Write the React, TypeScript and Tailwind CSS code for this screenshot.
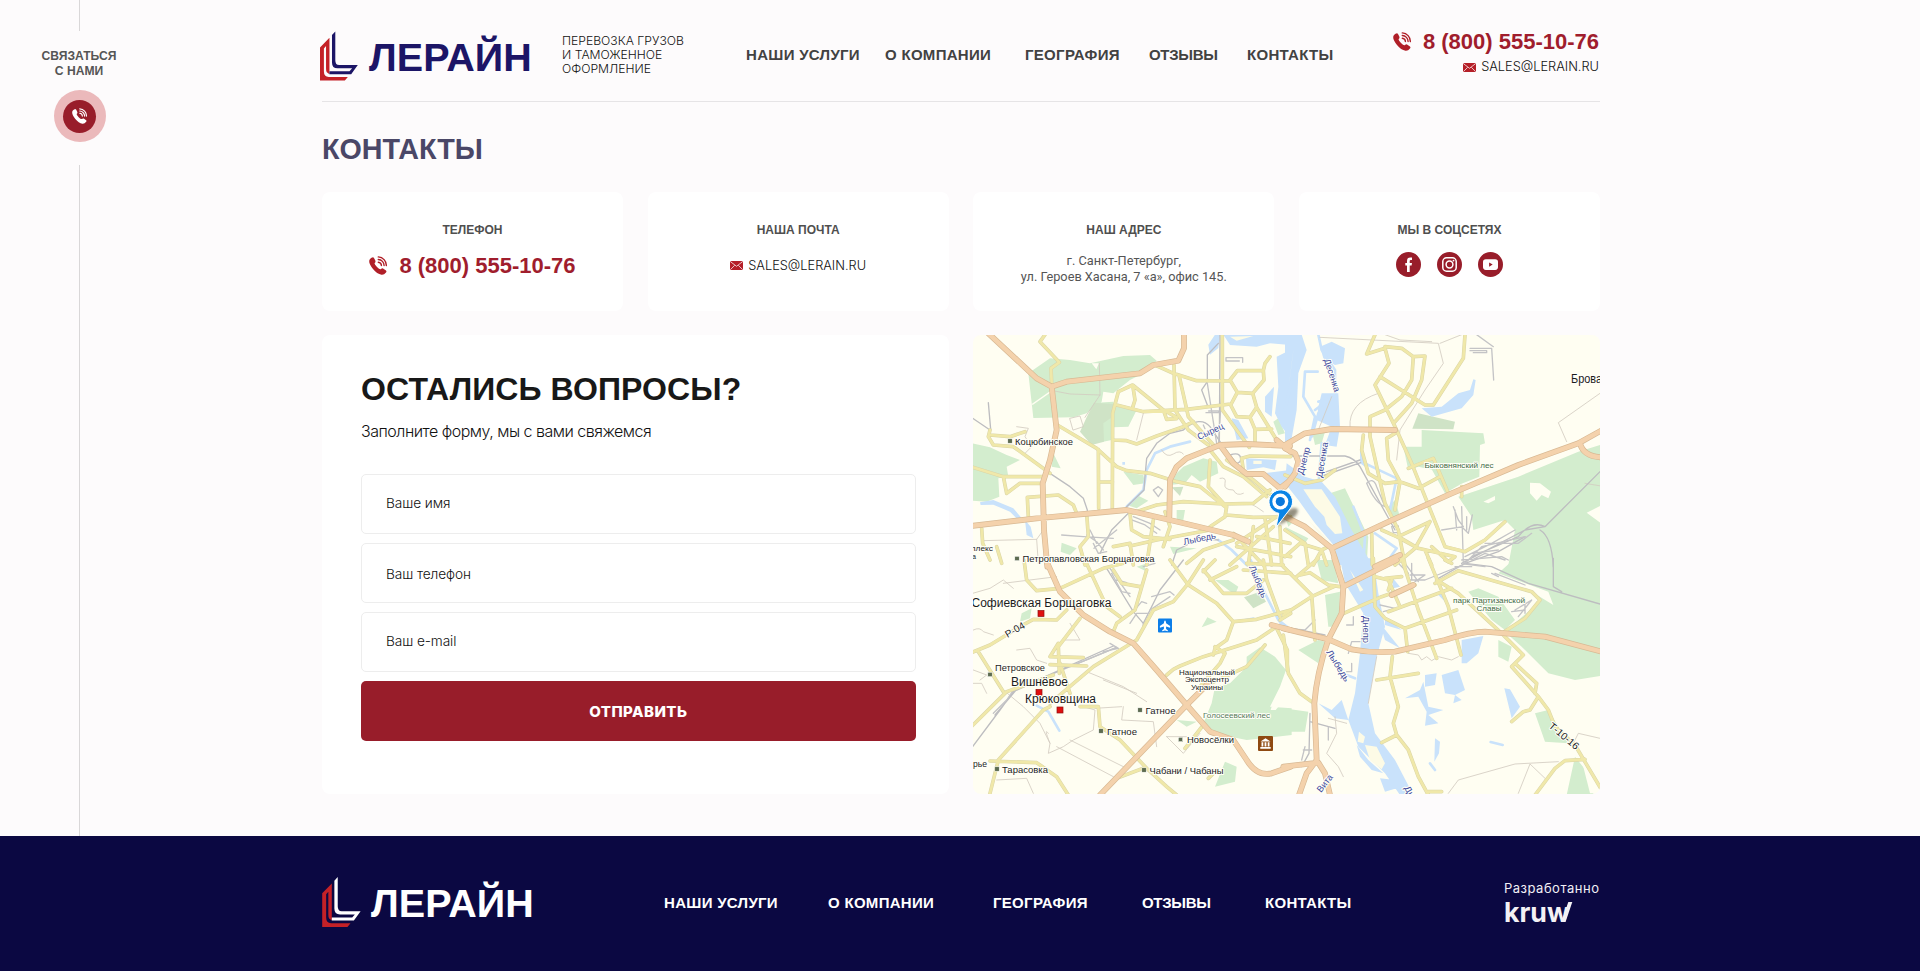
import type { ReactNode } from 'react';

/* ---------- map data: four tiles, drawn at three units per pixel ---------- */

type Tile = {
  x: number;
  y: number;
  forest: string;
  glade: string;
  cemetery: string;
  water: string;
  stream: string;
  isle: string;
  border: string;
  rail: string;
  yard: string;
  road: string;
  highway: string;
};

const northWest: Tile = {
  x: 970,
  y: 330,
  forest:
    'M175 130 L240 85 L300 90 L360 100 L460 78 L540 75 L560 92 L520 130 L480 150 L430 190 L400 185 L395 215 L350 250 L310 262 L190 264Z M430 215 L435 230 L495 235 L500 240 L475 290 L430 292 L425 330 L400 335 L380 218Z M8 340 L60 352 L110 375 L150 390 L110 410 L115 440 L85 445 L88 500 L50 515 L8 512Z M250 370 L272 415 L245 410Z M640 410 L700 385 L740 395 L745 430 L690 455 L665 435 L645 460 L600 465 L620 430Z M470 525 L505 497 L535 512 L500 535Z M620 540 h25 l-5 30 h-20z M275 638 L320 655 L300 675 L272 665Z M910 275 L925 265 L945 310 L925 315Z M460 425 L520 435 L525 460 L490 465Z M940 540 L975 570 L955 590Z M600 650 L680 655 L610 672Z',
  glade: 'M185 222 L245 180 L248 183 L188 225Z M365 100 h22 l-8 18z',
  cemetery: 'M372 218 L430 222 L428 260 L400 280 L402 335 L365 345 L330 305 L350 262Z M605 472 L640 470 L630 498Z',
  water:
    'M760 14 H960 V45 L900 40 L860 50 L780 45Z M735 14 h15 l-5 40 l-25 20 l-5 -30z M885 200 L912 170 L905 260 L885 245Z M920 80 L950 65 L962 120 V325 L935 290 L915 250 L925 170Z M785 265 L805 270 L835 325 L800 330Z M828 385 L920 390 L915 420 L880 412 L830 420Z M165 570 L182 590 L190 625 L170 615Z M30 517 L70 510 L130 535 L158 568 L145 570 L120 545 L70 524 L32 525Z M880 430 L930 470 L960 440 V420Z M457 396 h8 v8 h-8z',
  stream: 'M470 530 L520 480 L530 420 L555 370 L600 350 L660 335 M745 630 L785 660 L830 705',
  isle: 'M850 392 h25 v10 h-25z M780 20 L850 18 L800 32Z',
  border:
    'M248 182 L300 192 L390 195 M388 100 L390 195 L345 262 M300 265 L330 258 L340 290 L310 300Z M520 250 L500 330 M38 632 L200 628 L220 600 M200 628 L205 700 M140 290 L175 295 L165 320 L185 350 L165 370 M575 360 Q590 385 610 372 T640 372 M750 445 Q770 440 765 460 T790 480 Q800 500 820 490 M840 520 Q860 530 880 545',
  rail: 'M8 265 L60 300 M55 218 L62 298 M240 430 L300 470 L340 505 L352 540 L352 560 M750 14 L748 350 M712 225 L695 180 L712 155 L712 75 L745 40 M640 300 L600 310 L560 340 L530 385 L525 440 L522 480 L470 530 M640 300 Q690 255 720 290 L760 350 L800 400 M475 550 L425 600 L390 670 M745 630 L690 625 L620 660 L605 705 M780 375 Q810 365 812 385 T780 400',
  yard: 'M768 83 h50 v14 M768 83 v10 h40 M708 248 h38 v-5 h-30 M745 350 L755 190 M740 340 L712 160 M350 615 L380 635 L400 660 M275 615 L340 620 L430 625 M370 640 L385 670 L410 665 M372 655 L440 600 M360 600 L380 640 M490 560 L540 580 L570 600 M485 570 L525 585 L560 610 M550 480 L565 500 L578 480 L565 470Z M700 285 L705 296',
  road: 'M225 14 L210 35 L268 97 L243 115 L245 160 M555 105 L610 130 L680 152 L780 153 M612 105 L615 240 L655 300 L715 345 M628 140 L655 260 L735 350 M757 14 L757 240 L800 300 L838 352 M900 80 L885 100 L880 122 L802 122 L780 150 L802 187 L848 190 L882 150 L880 122 M802 187 L782 225 L800 260 L840 262 L860 232 L848 190 M860 232 L920 330 M840 262 L855 298 L905 297 M855 298 V335 M440 225 L520 245 L650 238 L782 222 M262 285 L380 355 L440 410 L470 422 L540 430 L620 455 L690 470 L765 530 M427 535 L428 250 L445 185 L488 165 L580 240 L620 262 M488 165 L495 210 L487 235 M580 240 L590 268 L620 266 M430 330 L470 332 L500 342 L560 318 L640 290 L670 275 M385 358 L386 535 M386 456 H428 M60 300 L55 320 L70 345 L130 350 L240 430 M60 315 L120 320 L165 305 M8 412 L100 440 L220 440 M100 440 L110 490 L150 460 L215 460 M175 560 L172 502 L265 495 L310 525 L318 545 M485 550 L560 525 L640 515 L760 522 L850 520 L900 480 M350 550 L355 620 L330 650 L345 705 M480 550 L485 600 L520 620 L600 628 M550 570 L530 705 M585 545 L600 590 L580 650 M720 360 L760 410 L820 440 L890 500 M770 390 L850 450 L910 500 M820 420 L815 385 L840 378 L962 380 M720 390 L715 470 L770 530 L765 560 L720 590 M770 555 L850 562 L962 560 M800 640 L920 560 M790 610 L880 705 M850 590 L835 705 M885 565 L905 705 M800 650 L962 680 M780 705 L910 590 M930 590 L935 705 M860 620 L960 640 M35 595 L38 640 L60 690 M80 650 L95 700 M480 648 L560 630 L640 615 L720 600 M650 700 L700 660 L790 630 M430 650 L480 640 L490 705',
  highway:
    'M55 10 L200 145 L245 170 L290 155 L510 130 L550 105 L625 92 L642 55 L642 10 M245 170 L260 300 L240 390 L218 460 L222 600 L232 710 M4 588 L200 565 L470 540 L600 570 L790 615 L835 635 M598 560 L600 450 L620 410 L650 385 L700 365 L750 345 L830 342 L960 348 M750 345 L790 400 L830 432 L880 432 L930 475 L962 450 M920 330 L962 365',
};

const northEast: Tile = {
  x: 1285,
  y: 330,
  forest:
    'M410 300 L595 310 L600 340 L585 345 L583 440 L520 465 L470 425 L400 410 L370 420 L355 350 L410 350Z M430 400 L540 455 L480 490Z M962 340 L880 365 L700 440 L520 500 L560 560 L565 600 L660 570 L690 600 L670 705 H962Z M330 510 L310 530 L325 560 L345 560Z M135 490 L180 475 L250 620 L245 705 L190 705 L170 560Z M0 590 L70 625 L60 640 L10 610Z M80 300 L120 305 L110 340 L90 345Z',
  glade: 'M962 520 L905 548 L962 590Z M735 458 L765 460 L798 485 L790 505 L770 495 L755 512 L735 490Z M595 515 L630 498 L630 510 L610 520Z',
  cemetery: 'M400 250 L510 275 L505 298 L382 296Z',
  water:
    'M0 14 L50 14 L65 60 L40 130 L35 240 L20 325 L0 350Z M105 50 L140 35 L180 55 L175 100 L150 105 L115 85Z M410 235 L470 230 L520 190 L555 180 L565 148 L572 150 L565 195 L530 235 L440 260Z M110 190 L160 190 L165 290 L155 350 L120 345 L140 290 L95 270 L100 230Z M5 400 L60 440 L110 455 L150 500 L200 600 L262 705 H158 L150 650 L90 580 L40 510 L0 460Z M225 360 L240 385 L240 410 L225 400Z',
  stream:
    'M100 14 L110 60 L150 120 L150 190 M98 125 L60 125 L55 200 L90 260 L75 330 M100 215 L130 210 L90 240 M100 250 L80 320 M240 400 L335 445 L315 540 M270 610 L335 655 L310 690 M205 530 L240 620 L235 705 M0 240 L20 150 M110 340 L100 470',
  isle: 'M55 478 L110 478 L165 560 L172 610 L150 612 L125 585 L118 560 L90 530Z M20 100 L28 40 L10 180Z M70 570 L130 630 L110 620Z',
  border:
    'M105 22 L460 40 L475 100 L420 180 L345 300 L335 390 M465 40 L530 14 M945 190 L820 278 L845 335 M280 190 Q190 220 195 290 M100 300 L140 200 M300 14 L345 30 L440 35 M900 460 L960 470',
  rail: 'M0 378 H180 Q210 385 225 410 L330 600 M110 430 L225 390 M112 438 L227 398 M945 425 L780 590 L720 600 L530 700 M780 590 Q740 570 700 620 L560 680 M765 600 Q800 620 805 710 M720 620 L640 665 L540 700',
  yard: 'M555 55 H620 L626 150 M575 14 L625 50 M555 62 h50 v6 h-40 M245 460 q20 -20 30 10 l25 60 q-30 -10 -55 -70 M320 590 l20 -2 v20 h-15z M530 530 L535 700 M505 530 L520 570 L535 590 L470 600 M510 540 L515 600 M562 555 L550 610 L530 590 M545 560 v40 M540 680 L620 640 L690 600 M530 690 L650 680 L670 690 M560 670 L640 660 M540 700 L590 650 L720 620 M600 640 L700 640 L740 610 M560 690 L600 670 L660 690',
  road: 'M270 14 L245 72 L300 55 L312 100 L270 165 L330 290 L380 400 L430 525 L480 650 L540 665 L600 630 L660 575 M300 50 L350 55 L385 80 L380 150 L350 200 L300 240 L255 260 L255 320 L300 520 L340 600 L360 705 M385 80 L420 78 L410 150 L380 220 L330 275 M285 140 L420 225 L445 225 L535 85 L540 14 M235 315 L230 360 L250 430 L300 460 L345 455 L400 475 L465 440 M330 310 L305 325 L310 390 L345 455 L330 540 M370 415 L445 385 L490 490 M0 435 L60 460 L110 450 L150 420 M435 575 L340 620 L400 655 L510 680 L490 695 L440 650 M260 610 L262 705 M290 600 L335 620 L400 655 M420 660 L440 705 M435 575 L390 655 L330 705 M0 600 L60 640 L70 705 M0 680 L45 640 L110 660 L130 650 M530 470 V500 M85 705 L110 660 L125 705',
  highway:
    'M0 345 L60 310 L140 297 L330 300 M0 470 L30 430 L40 395 L30 370 L0 355 M0 560 L60 590 L140 655 L158 710 M140 655 L300 580 L500 490 L700 405 L880 340 L950 301 M885 340 Q895 380 950 382 M345 675 L270 710',
};

const southWest: Tile = {
  x: 970,
  y: 560,
  forest:
    'M155 160 L185 145 L180 175 L150 185Z M830 290 L870 262 L915 290 L948 330 L930 380 L900 440 L965 445 V525 L830 540 L730 520 L700 490 L725 430 L735 380 L780 370 L830 320Z M765 605 L800 620 L795 665 L735 680Z M735 60 h40 l30 20 l-10 25 l-20 -15z M500 20 l25 -8 v20z M620 480 L680 485 L650 500Z M712 172 L740 185 L695 202Z',
  glade: 'M905 440 h20 l-8 10 h-15z',
  cemetery: 'M822 112 L870 95 L888 125 L850 145Z',
  water: 'M915 165 L945 195 L935 205Z',
  stream: 'M842 0 L885 100 L925 180 L950 200 M200 437 L235 455 L268 512 M820 182 L850 176',
  isle: '',
  border:
    'M100 390 L160 440 L210 490 L240 550 L235 580 L280 560 L310 540 L370 510 L375 450 L340 440 M350 335 L460 380 L530 425 M8 100 L60 85 L100 60 L130 85 M10 330 L50 345 L30 360 M10 370 h25 l15 30 M140 270 L180 265 L200 300 L230 310 M300 540 L460 620 M460 440 L455 480 L550 485 L560 560 M260 560 L430 650 M590 530 L640 580 L690 520 M590 530 L650 530 M80 660 L170 655 L190 700 M300 190 L330 240 L285 240 M100 70 L260 50 M240 550 Q220 500 235 520 M375 445 L455 440 M10 210 Q30 200 40 215 L70 225 M400 360 L500 400',
  rail: 'M8 560 L90 450 L130 395 L240 345 L440 262 M75 465 L140 388 L430 258 M410 25 L450 90 L490 155 L520 190 L540 150 L570 90 L640 0',
  yard: 'M420 25 L480 110 M425 40 L455 95 L480 100 M440 60 L470 68 M490 155 L515 125 L530 130 M545 110 L600 95 L612 105 M540 150 L600 110 M480 190 L500 160 L545 160 M520 190 L518 205 M420 250 L445 265 L400 275 M70 460 L110 420 L130 390 M300 320 L440 262 M555 10 L520 20',
  road: 'M4 278 L60 255 L150 200 L190 178 L260 180 L290 150 M162 0 L170 60 L200 92 L270 85 L400 25 L460 10 M345 0 L410 140 L450 170 M430 30 L455 70 L510 80 M530 30 L495 150 L440 190 L430 215 M330 175 L265 260 L268 340 M240 290 L340 293 M240 314 L350 318 M240 290 L265 250 M240 430 L370 320 L500 240 L550 150 L610 125 L655 70 L700 0 M600 0 L655 75 L740 130 L790 185 L860 178 L962 150 M700 30 L760 100 L830 100 L880 60 M590 345 L610 328 L630 318 L700 290 L860 240 L920 200 M790 185 L770 240 L735 265 L730 285 M735 260 L765 280 L750 310 L690 380 M690 385 L830 320 L885 255 M4 500 L110 395 L250 345 M25 275 L100 395 M60 700 L85 600 L220 450 L240 440 M60 603 L200 608 L260 650 L295 705 M330 440 L385 440 L390 500 L450 540 L530 625 L590 680 L620 705 M440 655 L520 625 M645 565 L700 495 M880 0 L890 60 L930 170 M920 205 L952 270 V330 M700 35 L735 0 M820 30 L962 40 M830 10 L940 15 M720 60 L800 20 M930 180 L962 160 M715 655 L730 640 M270 310 L300 400',
  highway:
    'M226 -4 L270 95 L340 165 L420 215 L490 250 L560 330 L650 435 L720 515 L790 540 L830 600 Q860 650 905 640 L962 620 M390 705 L520 570 L650 435 L715 370 M905 195 L962 210',
};

const southEast: Tile = {
  x: 1285,
  y: 560,
  forest:
    'M690 -5 H962 V345 L870 360 L790 340 L710 260 L660 215 L770 120 L740 95 L805 135 L790 95 L640 40Z M550 95 L580 85 L640 110 L690 180 L660 210 L620 180Z M640 240 L680 260 L670 305 L640 290Z M120 105 L165 95 L160 200 L130 200Z M40 270 L100 240 L120 245 L100 310Z M-5 445 L70 455 L60 515 L-5 515Z M750 460 L790 450 L850 550 L780 545Z M870 590 L925 660 V705 H845Z M95 0 L145 0 L160 70 L110 60Z',
  glade: 'M925 640 L962 700 H915 L895 620Z',
  cemetery: '',
  water:
    'M165 -5 H265 L280 100 L300 200 L275 290 L250 430 L270 520 L330 600 L385 705 H345 L300 640 L220 560 L190 480 L210 400 L225 280 L235 160 L180 70Z M285 190 L345 265 L300 240Z M300 170 L350 210 L300 195Z M100 430 L140 450 L170 420 L190 480 L150 475Z M215 555 L250 600 L295 640 L260 630 L225 590Z M285 655 L330 660 L350 680 L300 695Z M530 240 L595 228 L580 280 L545 310 L530 310Z M470 345 L520 330 L540 390 L510 405 L480 400Z M420 345 L455 340 L450 375 L420 380Z M360 415 L405 390 L415 365 L430 440 L475 450 L430 465 L460 490 L420 497 L425 455 L400 410Z M658 385 L675 388 L705 440 L680 475Z M450 535 L465 545 L462 580 L448 605Z M455 100 L475 90 L480 125Z M320 50 L345 80 L325 85Z M510 405 L530 420 L505 430Z',
  stream: 'M185 345 L210 355 M435 610 L450 630 M617 546 L653 555',
  isle: 'M240 555 L275 560 L300 610 L290 628 L255 600Z M222 515 L240 530 L235 550 L218 545Z M195 30 L235 90 L225 95Z',
  border:
    'M490 700 L520 660 L690 612 L820 605 M700 700 L735 612 L780 655 M370 280 L400 285 L410 300 L425 290 L440 302 L460 290 L500 300 L520 290 M860 560 L880 520 L945 535 M250 430 L275 290 M130 475 L185 490 M150 470 L155 520 L125 580 L160 620 L175 650',
  rail: 'M460 55 L540 10 L620 20 L730 70 L945 132 M805 -5 V80 L830 95 M-5 200 L120 225 M75 460 L72 580 L50 620 M75 485 L150 505',
  yard: 'M360 10 L400 65 M375 45 h45 l-30 20 M380 10 v50 M370 60 h50 M420 60 L540 12 L600 20 M285 135 L330 145 L295 155 M690 150 L740 120 L700 170 M680 155 L720 150 M720 120 V160 M620 40 L640 50 M130 500 V540 M55 570 L80 570 M50 600 L60 560 M190 280 L200 245 H225 M205 170 v25 h-20 M200 310 v25 h-15 M-5 205 L60 210 L90 180 M340 10 L370 40 M510 20 H560 M630 40 L720 75',
  road: 'M-5 20 L80 105 L90 240 M45 45 L75 38 L130 75 L165 80 M35 50 L100 -5 M-5 165 L80 110 L150 78 M-5 225 L10 340 L45 400 L80 425 M165 165 L290 110 L390 75 M265 -5 L270 140 L300 175 L360 205 L368 275 M270 50 L310 60 L345 140 M350 -5 L400 150 L455 295 M300 55 L350 50 M430 -5 L490 140 L528 285 M310 155 L460 100 L500 85 M360 205 L515 150 M450 70 L520 32 L740 95 L765 120 L720 175 L650 220 M455 60 L520 100 L650 220 L715 285 L680 320 L760 410 L790 450 L810 500 L870 555 L950 690 M690 310 L755 370 L750 400 M760 410 L735 450 L715 455 L680 485 M322 290 L315 350 L340 440 L325 490 L335 525 L290 548 M335 525 L370 570 L400 650 L430 705 M275 360 L400 340 M750 705 L810 625 L840 602 L900 598 M430 695 H470 M480 0 L500 10 M310 90 L320 60',
  highway:
    'M-5 205 L130 238 L200 268 Q260 280 330 275 L480 240 Q560 215 600 215 L780 230 L950 275 M148 -5 L175 80 L170 160 L130 238 Q95 340 88 430 L95 600 L65 640 L42 705 M-5 620 L100 608 L120 640 L135 705 M175 80 L335 0 M320 105 L385 75',
};

const tiles = [northWest, northEast, southWest, southEast];

function Layer({ pick, ...rest }: { pick: keyof Omit<Tile, 'x' | 'y'>; fill?: string; stroke?: string; strokeWidth?: number }) {
  return (
    <>
      {tiles.map((t) => (
        <path
          key={`${t.x}-${t.y}`}
          d={t[pick]}
          transform={`translate(${t.x} ${t.y}) scale(0.33333)`}
          strokeLinejoin="round"
          strokeLinecap="round"
          {...rest}
        />
      ))}
    </>
  );
}

type Label = { t: string; x: number; y: number; w: number; s: number; c?: string; r?: number };

const labels: Label[] = [
  { t: 'Коцюбинское', x: 1015, y: 444.5, w: 58, s: 9.2 },
  { t: 'Петропавловская Борщаговка', x: 1022.5, y: 562, w: 132, s: 9.2 },
  { t: 'плекс', x: 971, y: 551, w: 22, s: 7.6 },
  { t: 'а', x: 972, y: 559, w: 4, s: 7.6 },
  { t: 'Софиевская Борщаговка', x: 971.5, y: 606.5, w: 140, s: 12 },
  { t: 'Петровское', x: 995, y: 671, w: 50, s: 9.2 },
  { t: 'Вишнёвое', x: 1011, y: 686, w: 57, s: 12 },
  { t: 'Крюковщина', x: 1025, y: 703, w: 71, s: 12 },
  { t: 'Гатное', x: 1145.5, y: 713.5, w: 30, s: 9.2 },
  { t: 'Гатное', x: 1107, y: 734.5, w: 30, s: 9.2 },
  { t: 'Новосёлки', x: 1187, y: 743, w: 47, s: 9.2 },
  { t: 'Чабани / Чабаны', x: 1149.5, y: 773.5, w: 74, s: 9.2 },
  { t: 'Тарасовка', x: 1002, y: 772.5, w: 46, s: 9.2 },
  { t: 'рье', x: 973, y: 766.5, w: 14, s: 9.2 },
  { t: 'Национальный', x: 1179, y: 674.5, w: 56, s: 7.8 },
  { t: 'Экспоцентр', x: 1185, y: 682, w: 44, s: 7.8 },
  { t: 'Украины', x: 1191, y: 690, w: 32, s: 7.8 },
  { t: 'Голосеевский лес', x: 1203, y: 718, w: 67, s: 8, c: '#55795a' },
  { t: 'Быковнянский лес', x: 1424.5, y: 468, w: 69, s: 8, c: '#3f6b45' },
  { t: 'парк Партизанской', x: 1453, y: 603, w: 72, s: 8, c: '#3f6b45' },
  { t: 'Славы', x: 1476.5, y: 610.5, w: 25, s: 8, c: '#3f6b45' },
  { t: 'Сырец', x: 1199, y: 440, w: 28, s: 9, c: '#3e4a9c', r: -25 },
  { t: 'Лыбедь', x: 1184, y: 545, w: 33, s: 9, c: '#3e4a9c', r: -12 },
  { t: 'Лыбедь', x: 1249, y: 567, w: 34, s: 9, c: '#3e4a9c', r: 68 },
  { t: 'Десенка', x: 1324, y: 360, w: 34, s: 9, c: '#3e4a9c', r: 72 },
  { t: 'Днепр', x: 1303, y: 475, w: 28, s: 9, c: '#3e4a9c', r: -75 },
  { t: 'Десенка', x: 1322, y: 478, w: 36, s: 9, c: '#3e4a9c', r: -80 },
  { t: 'Днепр', x: 1363, y: 616, w: 27, s: 9, c: '#3e4a9c', r: 90 },
  { t: 'Лыбедь', x: 1326, y: 652, w: 36, s: 9, c: '#3e4a9c', r: 58 },
  { t: 'Вита', x: 1321, y: 793, w: 20, s: 9, c: '#3e4a9c', r: -52 },
  { t: 'Дн', x: 1404, y: 788, w: 12, s: 9, c: '#3e4a9c', r: 60 },
  { t: 'Р-04', x: 1007.5, y: 638, w: 21, s: 10, r: -30 },
  { t: 'Т-10-16', x: 1548, y: 727, w: 36, s: 10, r: 40 },
  { t: 'Бровары', x: 1571, y: 382.5, w: 45, s: 12 },
];

const villages = [
  [1010, 441], [1017, 558.5], [990, 674.5], [1140, 710], [1101, 731], [1180.5, 739.5], [1144, 770], [997, 769],
];
const towns = [
  [1041, 613.5], [1039, 692.5], [1060, 710],
];

function CityMap() {
  return (
    <svg className="block h-[459px] w-[627px] rounded-lg" viewBox="973 335 627 459">
      <rect x="973" y="335" width="627" height="459" fill="#fffef2" />
      <Layer pick="forest" fill="#d3edce" />
      <Layer pick="cemetery" fill="#cfe3c6" />
      <Layer pick="glade" fill="#fffef2" />
      <Layer pick="water" fill="#c9e2fb" />
      <Layer pick="stream" fill="none" stroke="#c9e2fb" strokeWidth={8} />
      <Layer pick="isle" fill="#fdfbe6" />
      <Layer pick="border" fill="none" stroke="#d2cbc0" strokeWidth={2.5} />
      <Layer pick="rail" fill="none" stroke="#bdbdc0" strokeWidth={4} />
      <Layer pick="yard" fill="none" stroke="#c4c4c6" strokeWidth={4} />
      <Layer pick="road" fill="none" stroke="#dad5a8" strokeWidth={11} />
      <Layer pick="road" fill="none" stroke="#f0e8a9" strokeWidth={8} />
      <Layer pick="highway" fill="none" stroke="#d8b994" strokeWidth={17.5} />
      <Layer pick="highway" fill="none" stroke="#f4d2ac" strokeWidth={13.5} />
      {villages.map(([x, y]) => (
        <rect key={`${x}-${y}`} x={x - 2.2} y={y - 2.2} width="4.400" height="4.400" fill="#5c6b50" stroke="#fff" strokeWidth="0.5" />
      ))}
      {towns.map(([x, y]) => (
        <rect key={`${x}-${y}`} x={x - 3} y={y - 3} width="6" height="6" fill="#e00f0f" stroke="#8d1010" strokeWidth="0.7" />
      ))}
      {labels.map((l, i) => (
        <text
          key={i}
          x={l.x}
          y={l.y}
          textLength={l.w}
          lengthAdjust="spacingAndGlyphs"
          fontSize={l.s}
          fill={l.c ?? '#1c1c1c'}
          stroke="#fffff8"
          strokeWidth="2"
          strokeLinejoin="round"
          paintOrder="stroke"
          fontFamily='"Liberation Sans", sans-serif'
          transform={l.r ? `rotate(${l.r} ${l.x} ${l.y})` : undefined}
        >
          {l.t}
        </text>
      ))}
      <rect x="1158" y="618.5" width="14" height="14" rx="1" fill="#0d7ee8" />
      <path
        d="M1165 620.3 q1.1 .8 1.1 3 l4 2.8 v1.6 l-4 -1.2 v2.4 l1.7 1.3 v1 l-2.8 -.6 l-2.8 .6 v-1 l1.7 -1.3 v-2.4 l-4 1.2 v-1.6 l4 -2.8 q0 -2.200 1.1 -3z"
        fill="#fff"
      />
      <rect x="1258" y="736" width="15" height="15" rx="1" fill="#8f4a12" />
      <path d="M1260.500 741.500 L1265.500 738.300 L1270.500 741.500Z M1261.500 742.300h1.800v4.200h-1.800z M1264.600 742.300h1.800v4.200h-1.800z M1267.700 742.300h1.800v4.200h-1.800z M1260.300 747h10.400v1.700h-10.400z" fill="#fff" />
      <defs>
        <filter id="pin-shadow" x="-50%" y="-50%" width="200%" height="200%">
          <feGaussianBlur stdDeviation="1.500" />
        </filter>
      </defs>
      <path d="M1277 526 L1286 512 Q1295 505 1298 510 Q1298 515 1291 519Z" fill="#2a2210" opacity="0.5" filter="url(#pin-shadow)" />
      <path
        d="M1276 527.500 L1278.800 513.300 A11.800 11.800 0 1 1 1290 509 Q1283 518 1276 527.500Z"
        fill="#0a84e6"
        stroke="#fff"
        strokeWidth="1"
      />
      <circle cx="1280.300" cy="501.600" r="8" fill="#fff" />
      <circle cx="1280.300" cy="501.600" r="4.600" fill="#0a78dc" />
    </svg>
  );
}

/* ---------- icons ---------- */

function PhoneIcon({ className }: { className: string }) {
  return (
    <svg viewBox="0 0 18 19" className={className}>
      <path
        fill="currentColor"
        d="M1 3 Q2.500 1.300 4 1.200 Q5 1.200 6.500 5 Q6.800 6.200 5.500 7.200 Q5.500 8.500 8 11 Q10.500 13.500 11.800 13.200 Q13 12 14 12.500 L17 14.500 Q18 15.300 17 16.500 Q15 19 12.500 18.700 Q8 18 4 13 Q0 8 .2 5 Q.3 4 1 3Z"
      />
      <path
        fill="none"
        stroke="currentColor"
        strokeWidth="1.400"
        strokeLinecap="round"
        d="M9.300 6.200a3.400 3.400 0 0 1 3.100 3.400 M9.300 3.500a6 6 0 0 1 5.800 6.100 M9.300 .9a8.400 8.400 0 0 1 8 8.700"
      />
    </svg>
  );
}

function MailIcon() {
  return (
    <svg viewBox="0 0 12 9" className="h-[9px] w-[13px] shrink-0" preserveAspectRatio="none">
      <rect width="12" height="9" rx="1.500" fill="#b51f28" />
      <path d="M.8 1 L6 5.300 L11.200 1 M.8 8.200 L4.300 4.300 M11.200 8.200 L7.700 4.300" fill="none" stroke="#fff" strokeWidth="0.7" />
    </svg>
  );
}

function LogoMark({ className }: { className: string }) {
  return (
    <svg viewBox="0 0 39 50.500" className={className}>
      <path fill="#c42127" d="M0 16.500 L9.700 6.500 V44 L7 42 Q6.200 41 6.200 38 V15 L4 17.500 V41 q0 5.700 5 5.700 H28.600 L25.500 50.400 H0Z" />
      <path
        fill="currentColor"
        d="M12.300 3.700 L15.700 0 V29.500 q0 5 4 5 H38.800 L32 44 H9.700 V41 H30.300 L33 37.800 H18 q-5.700 0 -5.700 -6Z"
      />
    </svg>
  );
}

/* ---------- page pieces ---------- */

function Phone() {
  return (
    <div className="flex items-start">
      <PhoneIcon className="mt-px mr-3 h-[19px] w-[18px] shrink-0 text-[#b01f28]" />
      <span className="text-[22px] leading-[22px] font-bold whitespace-nowrap text-[#a01d2d]">8 (800) 555-10-76</span>
    </div>
  );
}

function Mail() {
  return (
    <div className="flex items-center">
      <MailIcon />
      <span className="ml-[5px] font-[Inter,sans-serif] text-[12.8px] leading-[14px] font-light whitespace-nowrap text-[#111]">
        SALES@LERAIN.RU
      </span>
    </div>
  );
}

function Card({ title, children }: { title: string; children: ReactNode }) {
  return (
    <section className="flex h-[119px] flex-col items-center rounded-lg bg-white pt-[30.500px]">
      <h2 className="text-[12px] leading-[14px] font-bold whitespace-nowrap text-[#4f4f4f]">{title}</h2>
      {children}
    </section>
  );
}

function Social({ children }: { children: ReactNode }) {
  return (
    <a className="flex size-[25px] items-center justify-center rounded-full bg-[#981d2a]">
      <svg viewBox="0 0 25 25" className="size-[25px]">
        {children}
      </svg>
    </a>
  );
}

function Field({ label, pad }: { label: string; pad: string }) {
  return (
    <div className={`h-[60px] rounded-[5px] border border-[#ededed] pl-6 ${pad}`}>
      <span className="block font-[Inter,sans-serif] text-[13.700px] leading-4 font-light tracking-[-0.1px] text-[#111]">{label}</span>
    </div>
  );
}

export default function App() {
  return (
    <div className="flex h-[971px] w-[1920px] flex-col overflow-hidden bg-[#fdfbfc] font-['Liberation_Sans',Arial,sans-serif]">
      <div className="flex h-[836px]">
        <aside className="flex w-[159px] flex-col items-center">
          <div className="mr-px h-[31px] w-px bg-[#d9d7d8]" />
          <p className="mt-[18px] mr-px text-center text-[12.100px] leading-[15px] font-bold text-[#555]">
            СВЯЗАТЬСЯ
            <br />С НАМИ
          </p>
          <div className="mt-[11px] flex size-[52px] items-center justify-center rounded-full bg-[#ebb9bb]">
            <div className="flex size-[33px] items-center justify-center rounded-full bg-[#981d2a] text-white">
              <PhoneIcon className="mr-px h-4 w-[15px]" />
            </div>
          </div>
          <div className="mt-[23px] w-px flex-1 bg-[#d9d7d8]" />
        </aside>

        <main className="ml-[163px] w-[1278px]">
          <header className="flex h-[102px] items-start border-b border-[#e6e4e6]">
            <LogoMark className="mt-[31px] -ml-[2px] h-[50px] w-[38px] shrink-0 text-[#1c1566]" />
            <div className="mt-[37px] ml-[11px] w-[193px] shrink-0 text-[39.500px] leading-[40px] font-bold tracking-[0.1px] text-[#1c1566]">
              ЛЕРАЙН
            </div>
            <p className="mt-[33.500px] w-[184px] shrink-0 font-[Inter,sans-serif] text-[12.200px] leading-[14px] font-light whitespace-nowrap text-[#111]">
              ПЕРЕВОЗКА ГРУЗОВ
              <br />
              И ТАМОЖЕННОЕ
              <br />
              ОФОРМЛЕНИЕ
            </p>
            <nav className="mt-[46.500px] flex text-[15px] leading-4 font-bold tracking-[0.3px] whitespace-nowrap text-[#424242]">
              <a className="w-[139px]">НАШИ УСЛУГИ</a>
              <a className="w-[140px]">О КОМПАНИИ</a>
              <a className="w-[124px]">ГЕОГРАФИЯ</a>
              <a className="w-[98px] tracking-[-0.3px]">ОТЗЫВЫ</a>
              <a className="w-[88px]">КОНТАКТЫ</a>
            </nav>
            <div className="mt-[31px] mr-px ml-auto flex flex-col items-end gap-[7px]">
              <Phone />
              <Mail />
            </div>
          </header>

          <h1 className="mt-[31px] text-[28.700px] leading-8 font-bold text-[#4a4767]">КОНТАКТЫ</h1>

          <div className="mt-[27px] grid grid-cols-4 gap-x-[24.667px] gap-y-6">
            <Card title="ТЕЛЕФОН">
              <div className="mt-[18.500px]">
                <Phone />
              </div>
            </Card>
            <Card title="НАША ПОЧТА">
              <div className="mt-[22px]">
                <Mail />
              </div>
            </Card>
            <Card title="НАШ АДРЕС">
              <p className="mt-[16.500px] text-center font-[Roboto,sans-serif] text-[12.750px] leading-4 whitespace-nowrap text-[#555]">
                г. Санкт-Петербург,
                <br />
                ул. Героев Хасана, 7 «а», офис 145.
              </p>
            </Card>
            <Card title="МЫ В СОЦСЕТЯХ">
              <div className="mt-[15.500px] flex gap-4">
                <Social>
                  <path
                    fill="#fff"
                    d="M11 20 V13.500 H9.300 V11 H11 V9 Q11 5.600 14.300 5.600 H16 V8 H14.800 Q13.700 8 13.700 9.100 V11 H16 L15.600 13.500 H13.700 V20Z"
                  />
                </Social>
                <Social>
                  <g fill="none" stroke="#fff" strokeWidth="1.500">
                    <rect x="5.800" y="5.800" width="13.400" height="13.400" rx="3.800" />
                    <circle cx="12.500" cy="12.500" r="3.400" />
                  </g>
                  <circle cx="16.500" cy="8.600" r="0.900" fill="#fff" />
                </Social>
                <Social>
                  <rect x="5" y="7.300" width="15" height="10.600" rx="2.800" fill="#fff" />
                  <path d="M11.100 10.500 L14.700 12.600 L11.100 14.700Z" fill="#981d2a" />
                </Social>
              </div>
            </Card>

            <section className="col-span-2 h-[459px] rounded-lg bg-white pr-[33px] pl-[39px]">
              <h2 className="pt-[36px] text-[32px] leading-9 font-bold tracking-[0.1px] whitespace-nowrap text-[#181818]">ОСТАЛИСЬ ВОПРОСЫ?</h2>
              <p className="mt-[14px] font-[Inter,sans-serif] text-[16px] leading-5 font-light tracking-[-0.5px] whitespace-nowrap text-[#111]">
                Заполните форму, мы с вами свяжемся
              </p>
              <form className="mt-[33px] flex flex-col gap-[9px]">
                <Field label="Ваше имя" pad="pt-[20px]" />
                <Field label="Ваш телефон" pad="pt-[22px]" />
                <Field label="Ваш e-mail" pad="pt-[20px]" />
                <button
                  type="button"
                  className="h-[60px] rounded-[5px] bg-[#981d2a] pt-0.5 font-[Inter,sans-serif] text-[15px] font-extrabold tracking-[0.45px] text-white"
                >
                  ОТПРАВИТЬ
                </button>
              </form>
            </section>
            <div className="col-span-2">
              <CityMap />
            </div>
          </div>
        </main>
      </div>

      <footer className="flex h-[135px] items-start bg-[#0b0842] pl-[322px] text-white">
        <LogoMark className="mt-[41px] h-[50px] w-[39px] shrink-0" />
        <div className="mt-[47px] ml-[10px] w-[293px] shrink-0 text-[39.500px] leading-[40px] font-bold tracking-[0.1px]">ЛЕРАЙН</div>
        <nav className="mt-[59px] flex text-[15px] leading-4 font-bold tracking-[0.3px] whitespace-nowrap">
          <a className="w-[164px]">НАШИ УСЛУГИ</a>
          <a className="w-[165px]">О КОМПАНИИ</a>
          <a className="w-[149px]">ГЕОГРАФИЯ</a>
          <a className="w-[123px] tracking-[-0.3px]">ОТЗЫВЫ</a>
          <a className="w-[239px]">КОНТАКТЫ</a>
        </nav>
        <div className="mt-[44px] font-[Inter,sans-serif]">
          <div className="text-[13px] leading-4 tracking-[0.5px] text-[#f1eff5]">Разработанно</div>
          <div className="relative mt-[3px] w-[72px] text-[26.700px] leading-[26px] font-bold text-[#f3f1f4]">
            kruw
            <svg viewBox="0 0 12 20" className="absolute top-[3px] left-[56.500px] h-5 w-3">
              <path d="M.5 20 L7.300 0 H11.300 L4.500 20Z" fill="#f3f1f4" />
            </svg>
          </div>
        </div>
      </footer>
    </div>
  );
}
